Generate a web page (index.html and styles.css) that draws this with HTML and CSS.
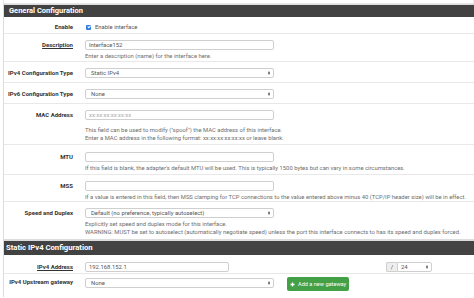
FILE: index.html
```html
<!DOCTYPE html>
<html lang="en">
<head>
    <meta charset="UTF-8">
    <meta name="viewport" content="width=device-width, initial-scale=1.0">
    <title>Interfaces / Interface152</title>
    <link rel="stylesheet" href="styles.css">
</head>
<body>
    <div class="prev-panel"></div>

    <!-- General Configuration -->
    <div class="panel">
        <div class="panel-heading">General Configuration</div>

        <div class="row row-check">
            <div class="label">Enable</div>
            <div class="field">
                <label class="checkbox"><span class="check"></span>Enable interface</label>
            </div>
        </div>

        <div class="row">
            <div class="label"><u>Description</u></div>
            <div class="field">
                <input class="input" type="text" value="Interface152">
                <div class="help">Enter a description (name) for the interface here.</div>
            </div>
        </div>

        <div class="row row-plain">
            <div class="label">IPv4 Configuration Type</div>
            <div class="field">
                <div class="select"><span>Static IPv4</span></div>
            </div>
        </div>

        <div class="row row-plain">
            <div class="label">IPv6 Configuration Type</div>
            <div class="field">
                <div class="select"><span>None</span></div>
            </div>
        </div>

        <div class="row row-mac">
            <div class="label">MAC Address</div>
            <div class="field">
                <input class="input" type="text" placeholder="xx:xx:xx:xx:xx:xx">
                <div class="help">This field can be used to modify ("spoof") the MAC address of this interface.<br>Enter a MAC address in the following format: xx:xx:xx:xx:xx:xx or leave blank.</div>
            </div>
        </div>

        <div class="row row-mtu">
            <div class="label">MTU</div>
            <div class="field">
                <input class="input" type="text">
                <div class="help">If this field is blank, the adapter's default MTU will be used. This is typically 1500 bytes but can vary in some circumstances.</div>
            </div>
        </div>

        <div class="row row-mss">
            <div class="label">MSS</div>
            <div class="field">
                <input class="input" type="text">
                <div class="help">If a value is entered in this field, then MSS clamping for TCP connections to the value entered above minus 40 (TCP/IP header size) will be in effect.</div>
            </div>
        </div>

        <div class="row row-last">
            <div class="label">Speed and Duplex</div>
            <div class="field">
                <div class="select"><span>Default (no preference, typically autoselect)</span></div>
                <div class="help">Explicitly set speed and duplex mode for this interface.<br>WARNING: MUST be set to autoselect (automatically negotiate speed) unless the port this interface connects to has its speed and duplex forced.</div>
            </div>
        </div>
    </div>

    <!-- Static IPv4 Configuration -->
    <div class="panel">
        <div class="panel-heading heading-ipv4">Static IPv4 Configuration</div>

        <div class="row row-addr">
            <div class="label"><u>IPv4 Address</u></div>
            <div class="field field-inline">
                <input class="input input-short" type="text" value="192.168.152.1">
                <div class="addon-group">
                    <span class="addon">/</span>
                    <div class="select select-cidr"><span>24</span></div>
                </div>
            </div>
        </div>

        <div class="row row-gateway">
            <div class="label">IPv4 Upstream gateway</div>
            <div class="field field-inline">
                <div class="select select-gw"><span>None</span></div>
                <button class="btn-success">
                    <svg width="5" height="5" viewBox="0 0 10 10"><path d="M5 1v8M1 5h8" stroke="#fff" stroke-width="2.6"/></svg>
                    Add a new gateway
                </button>
            </div>
        </div>
    </div>
</body>
</html>
```

FILE: styles.css
```css
body {
    margin: 0;
    font-family: Roboto, "Liberation Sans", sans-serif;
    background-color: #fff;
    color: #333;
    overflow: hidden;
}
.prev-panel {
    height: 3px;
    margin-left: 3px;
    border: 1px solid #e6e6e6;
    border-top: none;
}
.panel {
    margin-left: 3px;
    border: 1px solid #dcdcdc;
    border-right: none;
    border-bottom: none;
}
.panel-heading {
    height: 12px;
    line-height: 12px;
    padding-left: 5px;
    background-color: #424242;
    color: #fff;
    font-size: 7.5px;
    font-weight: bold;
}
.heading-ipv4 {
    height: 14px;
    line-height: 14px;
    padding-left: 2px;
    font-size: 7.7px;
}
.row {
    display: grid;
    grid-template-columns: 69px 1fr;
    column-gap: 12px;
    padding: 6px 0 1px;
    border-bottom: 1px solid #e8e8e8;
}
.row-check {
    padding: 5px 0 1px;
}
.row-plain {
    padding: 6px 0 4px;
}
.row-mac .help {
    margin-top: 6px;
}
.row-mac {
    padding-bottom: 2px;
}
.row-mtu {
    padding: 7px 0 2px;
}
.row-mss {
    padding-bottom: 0;
}
.row-last {
    padding-bottom: 3px;
    border-bottom: 1px solid #dcdcdc;
}
.row-addr {
    padding: 7px 0 1px;
}
.row-gateway {
    padding: 3px 0 6px;
    border-bottom: none;
}
.label {
    text-align: right;
    font-size: 6px;
    font-weight: bold;
    line-height: 10px;
    white-space: nowrap;
}
.field {
    min-width: 0;
}
.field-inline {
    display: flex;
    align-items: flex-start;
}
.input, .select {
    display: block;
    box-sizing: border-box;
    width: 189px;
    height: 10px;
    margin: 0;
    padding: 0 3px;
    border: 1px solid #cfcfcf;
    border-radius: 2px;
    background-color: #fff;
    font-family: inherit;
    font-size: 5.9px;
    color: #555;
    outline: none;
}
.input::placeholder {
    color: #aaa;
}
.input-short {
    width: 144px;
}
.select {
    position: relative;
    line-height: 8px;
    padding-left: 5px;
    white-space: nowrap;
}
.select::before, .select::after {
    content: "";
    position: absolute;
    right: 3px;
    border-left: 1.5px solid transparent;
    border-right: 1.5px solid transparent;
}
.select::before {
    top: 2px;
    border-bottom: 2px solid #555;
}
.select::after {
    bottom: 2px;
    border-top: 2px solid #555;
}
.checkbox {
    display: flex;
    align-items: center;
    font-size: 5.9px;
    line-height: 10px;
    color: #555;
}
.check {
    position: relative;
    width: 5px;
    height: 5px;
    margin: 0 4px 0 1px;
    border-radius: 1px;
    background-color: #2f7ee8;
}
.check::after {
    content: "";
    position: absolute;
    left: 1.5px;
    top: 0.5px;
    width: 1px;
    height: 2.4px;
    border-right: 1px solid #fff;
    border-bottom: 1px solid #fff;
    transform: rotate(45deg);
}
.help {
    margin-top: 2px;
    font-size: 5.87px;
    line-height: 8px;
    color: #6e6e6e;
    white-space: nowrap;
}
.addon-group {
    display: flex;
    margin-left: 157px;
}
.addon {
    box-sizing: border-box;
    width: 11px;
    height: 10px;
    line-height: 8px;
    text-align: center;
    border: 1px solid #cfcfcf;
    border-right: none;
    border-radius: 2px 0 0 2px;
    background-color: #eee;
    font-size: 5.9px;
    color: #555;
}
.select-cidr {
    width: 35px;
    padding-left: 3px;
    border-radius: 0 2px 2px 0;
}
.select-gw {
    margin-top: 1px;
}
.btn-success {
    display: flex;
    align-items: center;
    gap: 3px;
    height: 14px;
    margin-left: 13px;
    padding: 0 3px;
    border: none;
    border-radius: 2px;
    background-color: #43a047;
    color: #fff;
    font-family: inherit;
    font-size: 5.6px;
    cursor: pointer;
}
```
